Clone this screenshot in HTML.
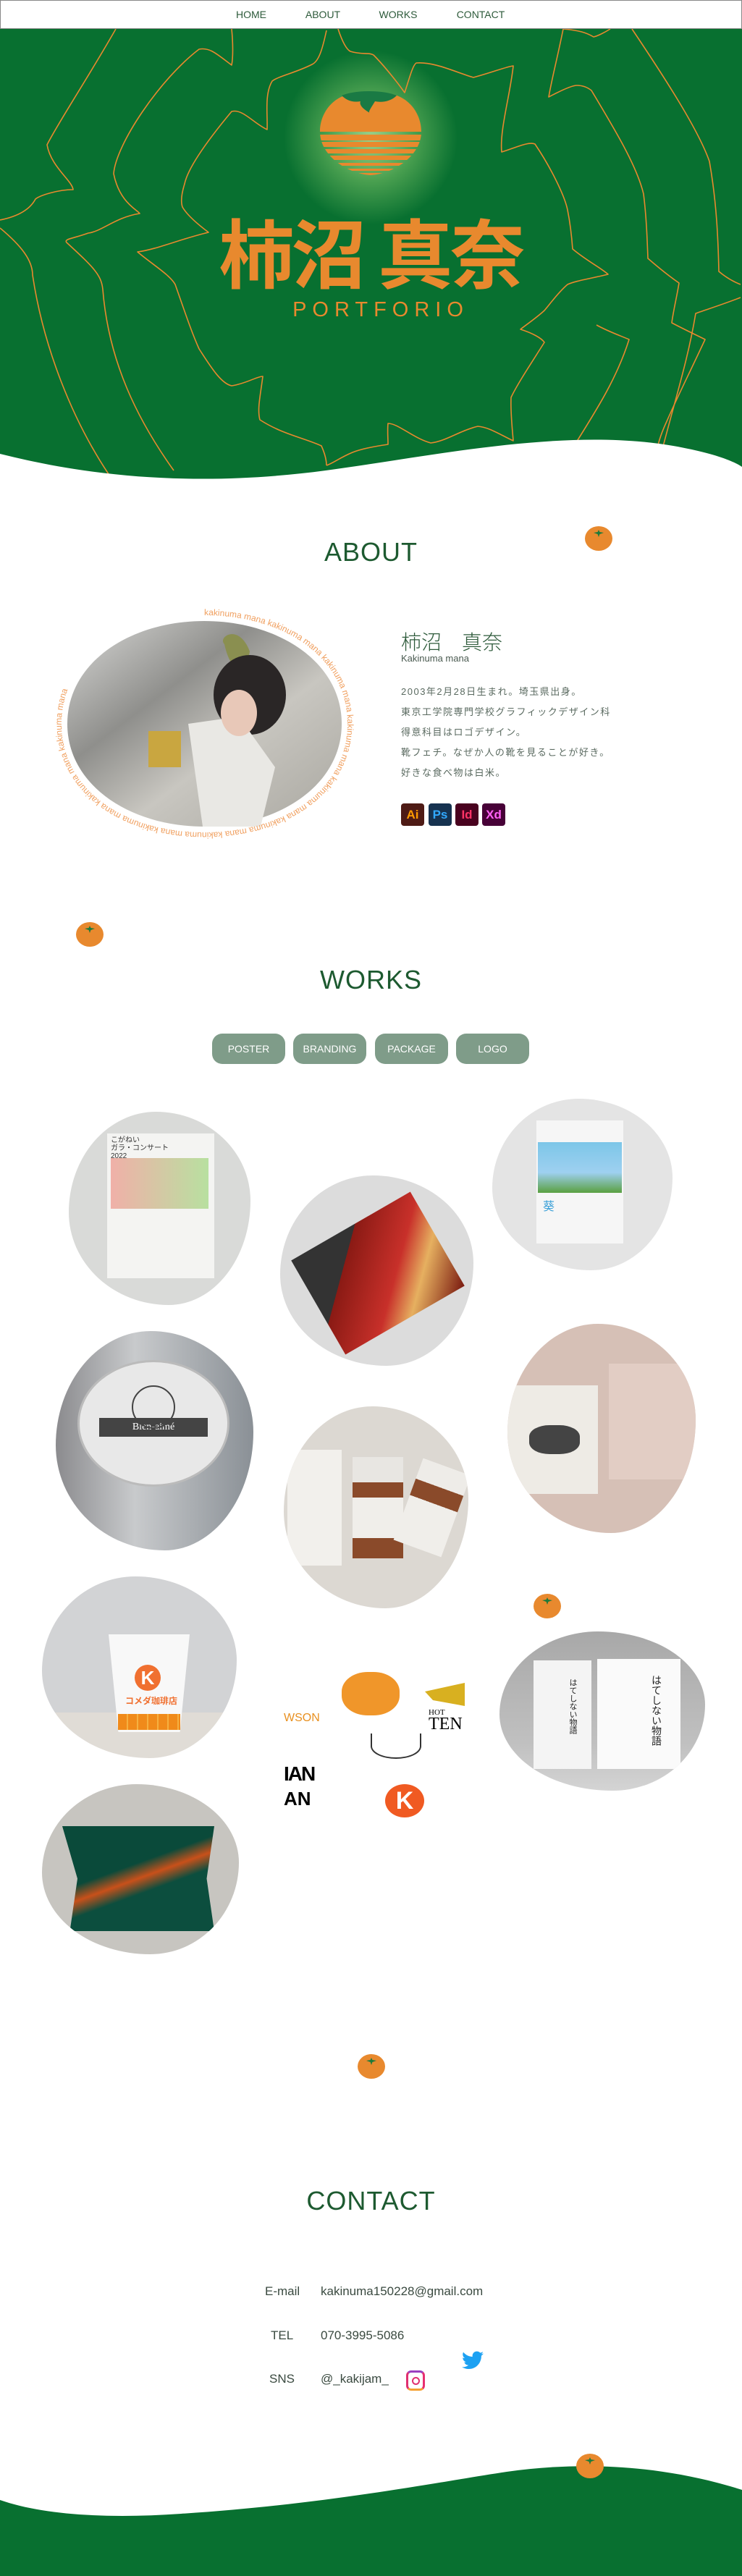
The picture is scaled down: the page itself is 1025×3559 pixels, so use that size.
<!DOCTYPE html>
<html><head><meta charset="utf-8"><style>
*{margin:0;padding:0;box-sizing:border-box}
body{width:1025px;height:3559px;position:relative;background:#fff;font-family:"Liberation Sans","Noto Sans CJK JP",sans-serif;overflow:hidden}
.a{position:absolute}
nav{position:absolute;left:0;top:0;width:1025px;height:40px;background:#fff;border:1px solid #888;z-index:5}
nav span{position:absolute;top:11px;font-size:14px;color:#2d5a3a;transform:translateX(-50%);font-weight:300}
h2{position:absolute;left:0;width:1025px;text-align:center;font-weight:300;font-size:36px;color:#1d5a30;letter-spacing:1px}
.btn{position:absolute;top:1428px;height:42px;width:101px;background:#7f9c89;border-radius:14px;color:#fff;font-size:14px;text-align:center;line-height:42px}
.blob{position:absolute;overflow:hidden;border-radius:48% 52% 45% 55% / 52% 46% 54% 48%}
.lbl{position:absolute;font-size:17px;color:#3a4a40}
.kaki{position:absolute;width:38px;height:34px;border-radius:50%;background:#e8892e}
.kaki:after{content:"";position:absolute;left:12px;top:5px;width:14px;height:10px;background:#1e7a3a;clip-path:polygon(0 40%,40% 30%,50% 0,60% 30%,100% 40%,60% 60%,50% 100%,40% 60%)}
</style></head><body>
<nav><span style="left:346px">HOME</span><span style="left:445px">ABOUT</span><span style="left:549px">WORKS</span><span style="left:663px">CONTACT</span></nav>

<svg class="a" style="left:0;top:0" width="1025" height="700" viewBox="0 0 1025 700">
<defs><radialGradient id="g" cx="512" cy="190" r="120" gradientUnits="userSpaceOnUse"><stop offset="0" stop-color="#9fd08a"/><stop offset=".5" stop-color="#4aa050"/><stop offset="1" stop-color="#087030"/></radialGradient>
<clipPath id="pc"><path d="M512,131 C470,120 442,150 442,182 C442,215 480,240 512,242 C544,240 582,215 582,182 C582,150 554,120 512,131 Z"/></clipPath></defs>
<rect x="0" y="40" width="1025" height="640" fill="#087030"/>
<circle cx="512" cy="190" r="120" fill="url(#g)"/>
<g fill="none" stroke="#e8892e" stroke-width="1.6" stroke-linejoin="round">
<path d="M160,40 C120,110 80,170 65,200 C70,230 100,250 101,262 C80,262 55,270 49,275 C40,292 20,300 0,304"/>
<path d="M0,315 C30,340 45,360 45,380 C60,480 100,580 150,655"/>
<path d="M320,40 C322,60 322,80 320,90 C300,75 290,65 275,68 C220,110 160,200 157,240 C165,280 190,290 193,295 C160,300 140,320 122,322 C100,330 88,330 92,335 C130,370 140,380 142,400 C150,500 190,580 240,650"/>
<path d="M451,42 C445,70 440,85 431,89 C410,100 385,105 376,112 C365,130 370,160 369,179 C350,170 335,150 320,154 C290,190 260,230 255,254 C250,270 250,280 252,286 C260,300 280,315 288,321 C250,330 215,345 190,348 C210,365 235,380 242,393 C255,430 265,460 275,482 C290,505 305,530 320,533 C340,530 355,520 363,520 C360,545 355,565 359,580 C390,600 420,605 444,616 C448,625 451,635 451,643"/>
<path d="M467,40 C472,55 478,68 484,71 C500,76 510,72 516,76 C530,90 550,115 559,128 C565,110 570,90 575,87 C600,85 630,100 654,107 C680,100 700,92 709,91 C705,130 690,180 693,210 C710,205 730,195 739,199 C760,230 780,270 784,290 C788,310 790,330 791,344 C810,360 830,370 840,379 C815,385 795,388 784,393 C770,405 760,420 752,429 C740,440 725,450 719,455 C735,460 748,467 752,473 C735,500 715,530 706,549 C705,570 708,595 709,609 C690,600 675,590 660,589 C635,595 615,610 595,612 C570,605 550,585 536,585 C535,595 536,605 536,614 C515,617 500,620 487,625 C470,632 460,640 451,643"/>
<path d="M843,40 C835,45 825,50 820,51 C810,45 800,42 778,40 C770,80 762,110 758,134 C775,125 790,118 797,118 C805,118 812,121 817,125 C850,180 880,230 889,268 C893,300 894,330 895,357 C910,370 925,382 938,391 C935,410 930,430 928,446 C945,455 960,462 974,469 C955,510 935,550 922,580 C915,595 910,608 908,620"/>
<path d="M873,40 C920,110 965,180 980,223 C990,280 992,330 993,375 C1005,385 1015,390 1023,393"/>
<path d="M1023,411 C1000,420 975,428 961,433 C950,500 930,560 910,640"/>
<path d="M824,449 C840,458 860,465 869,469 C850,530 815,580 778,640"/>
</g>
<g clip-path="url(#pc)" fill="#e8892e">
<rect x="440" y="120" width="145" height="62"/>
<rect x="440" y="186" width="145" height="8"/><rect x="440" y="196" width="145" height="7"/><rect x="440" y="206" width="145" height="6"/><rect x="440" y="215" width="145" height="6"/><rect x="440" y="225" width="145" height="4"/><rect x="440" y="233" width="145" height="3"/><rect x="440" y="239" width="145" height="3"/>
</g>
<path d="M472,132 C490,124 530,124 548,132 C540,140 528,142 518,140 C512,150 508,155 511,156 C500,150 496,144 498,140 C486,142 478,138 472,132 Z" fill="#1a7a44"/>
<path d="M0,627 C150,665 300,670 450,650 C600,630 780,590 930,616 C980,625 1010,635 1025,645 L1025,700 L0,700 Z" fill="#fff"/>
<text x="512" y="390" text-anchor="middle" font-family="Noto Sans CJK JP,sans-serif" font-weight="bold" font-size="104" fill="#e8892e" letter-spacing="-4">柿沼 真奈</text>
<text x="526" y="437" text-anchor="middle" font-family="Liberation Sans,sans-serif" font-size="29" fill="#e8892e" letter-spacing="8">PORTFORIO</text>
</svg>

<h2 style="top:742px">ABOUT</h2>
<div class="kaki" style="left:808px;top:727px"></div>

<svg class="a" style="left:60px;top:840px" width="440" height="320" viewBox="60 840 440 320">
<defs><linearGradient id="ph" x1="0" y1="0" x2="1" y2="1"><stop offset="0" stop-color="#d8d8d6"/><stop offset=".35" stop-color="#8f8f8c"/><stop offset=".6" stop-color="#c8c6c0"/><stop offset="1" stop-color="#a9a7a0"/></linearGradient>
<path id="ring" d="M282,850 C395,850 480,910 480,1000 C480,1090 395,1150 282,1150 C170,1150 85,1090 85,1000 C85,910 170,850 282,850 Z"/></defs>
<path d="M282,858 C385,858 472,915 472,1000 C472,1085 385,1142 282,1142 C180,1142 93,1085 93,1000 C93,915 180,858 282,858 Z" fill="url(#ph)"/>
<path d="M310,890 C300,880 330,860 345,900 C340,930 320,935 310,890 Z" fill="#8a8f50"/>
<ellipse cx="345" cy="960" rx="50" ry="55" fill="#2a2626"/>
<path d="M260,1000 L330,990 L380,1060 L360,1142 L280,1142 Z" fill="#e9e8e4"/>
<rect x="205" y="1010" width="45" height="50" fill="#c9a640"/>
<ellipse cx="330" cy="985" rx="25" ry="32" fill="#e8c8b8"/>
<text font-size="12" fill="#f0a060" font-family="Liberation Sans,sans-serif"><textPath href="#ring">kakinuma  mana   kakinuma  mana   kakinuma  mana   kakinuma  mana   kakinuma  mana   kakinuma  mana   kakinuma  mana   kakinuma  mana  kakinuma  mana  kakinuma  mana</textPath></text>
</svg>

<div class="a" style="left:554px;top:866px;font-size:28px;color:#2d5a3a;font-weight:300">柿沼　真奈</div>
<div class="a" style="left:554px;top:902px;font-size:13px;color:#4a5a50">Kakinuma mana</div>
<div class="a" style="left:554px;top:942px;font-size:13px;color:#5a6a60;line-height:28px;letter-spacing:1.5px">2003年2月28日生まれ。埼玉県出身。<br>東京工学院専門学校グラフィックデザイン科<br>得意科目はロゴデザイン。<br>靴フェチ。なぜか人の靴を見ることが好き。<br>好きな食べ物は白米。</div>
<div class="a" style="left:554px;top:1110px;width:32px;height:31px;background:#4e1b15;border-radius:4px;color:#ff9a00;font-weight:bold;font-size:17px;text-align:center;line-height:31px">Ai</div>
<div class="a" style="left:592px;top:1110px;width:32px;height:31px;background:#163250;border-radius:4px;color:#31a8ff;font-weight:bold;font-size:17px;text-align:center;line-height:31px">Ps</div>
<div class="a" style="left:629px;top:1110px;width:32px;height:31px;background:#49021f;border-radius:4px;color:#ff3366;font-weight:bold;font-size:17px;text-align:center;line-height:31px">Id</div>
<div class="a" style="left:666px;top:1110px;width:32px;height:31px;background:#470137;border-radius:4px;color:#ff61f6;font-weight:bold;font-size:17px;text-align:center;line-height:31px">Xd</div>

<div class="kaki" style="left:105px;top:1274px"></div>
<h2 style="top:1333px">WORKS</h2>
<div class="btn" style="left:293px">POSTER</div>
<div class="btn" style="left:405px">BRANDING</div>
<div class="btn" style="left:518px">PACKAGE</div>
<div class="btn" style="left:630px">LOGO</div>

<div class="blob" style="left:95px;top:1536px;width:251px;height:267px;background:#d9dad8">
 <div class="a" style="left:53px;top:30px;width:148px;height:200px;background:#f4f4f2"></div>
 <div class="a" style="left:58px;top:64px;width:135px;height:70px;background:linear-gradient(90deg,#f0b0a8,#b8e0a0)"></div>
 <div class="a" style="left:58px;top:34px;font-size:10px;color:#333;line-height:11px">こがねい<br>ガラ・コンサート<br>2022</div>
</div>
<div class="blob" style="left:387px;top:1624px;width:267px;height:263px;background:#dcdcdc">
 <div class="a" style="left:40px;top:60px;width:190px;height:150px;background:linear-gradient(135deg,#333 0 30%,#8a1a14 30%,#c8302a 60%,#e6b060 75%,#7a1a10);transform:rotate(-30deg)"></div>
</div>
<div class="blob" style="left:680px;top:1518px;width:249px;height:237px;background:#e4e4e4">
 <div class="a" style="left:61px;top:30px;width:120px;height:170px;background:#f6f6f6"></div>
 <div class="a" style="left:63px;top:60px;width:116px;height:70px;background:linear-gradient(180deg,#7cc6e8,#9ed0f0 60%,#5aa040)"></div>
 <div class="a" style="left:70px;top:135px;font-size:16px;color:#3aa0d8">葵</div>
</div>
<div class="blob" style="left:77px;top:1839px;width:273px;height:303px;background:linear-gradient(90deg,#8b8b8e,#c8cacc 40%,#8a9096)">
 <div class="a" style="left:30px;top:40px;width:210px;height:175px;border-radius:50%;background:#e8e8e8;border:3px solid #bbb"></div>
 <div class="a" style="left:60px;top:120px;width:150px;height:26px;background:#444;color:#fff;font-family:'Liberation Serif',serif;font-size:14px;text-align:center;line-height:26px">Bien-aimé</div>
 <div class="a" style="left:105px;top:75px;width:60px;height:60px;border:2px solid #444;border-radius:50%"></div>
</div>
<div class="blob" style="left:392px;top:1943px;width:255px;height:279px;background:#dcd8d2">
 <div class="a" style="left:5px;top:60px;width:75px;height:160px;background:#f2f0ec"></div>
 <div class="a" style="left:95px;top:70px;width:70px;height:140px;background:linear-gradient(180deg,#e8e6e2 0 25%,#8a4a2a 25% 40%,#f0eeea 40% 80%,#8a4a2a 80%)"></div>
 <div class="a" style="left:170px;top:80px;width:70px;height:120px;background:linear-gradient(180deg,#eeece8 0 25%,#8a4a2a 25% 45%,#f0eeea 45%);transform:rotate(20deg)"></div>
</div>
<div class="blob" style="left:701px;top:1829px;width:260px;height:289px;background:#d6c0b6">
 <div class="a" style="left:0;top:85px;width:125px;height:150px;background:#eeebe5"></div>
 <div class="a" style="left:140px;top:55px;width:120px;height:160px;background:#e2cdc4"></div>
 <div class="a" style="left:30px;top:140px;width:70px;height:40px;background:#444;border-radius:40%"></div>
</div>
<div class="kaki" style="left:737px;top:2202px"></div>
<div class="blob" style="left:58px;top:2178px;width:269px;height:251px;background:linear-gradient(180deg,#d2d3d5 0 75%,#e0dcd6 75%)">
 <div class="a" style="left:92px;top:80px;width:112px;height:135px;background:#f8f8f8;clip-path:polygon(0 0,100% 0,88% 100%,12% 100%)"></div>
 <div class="a" style="left:105px;top:190px;width:86px;height:22px;background:repeating-linear-gradient(90deg,#f08a1a 0 12px,#f5b040 12px 14px)"></div>
 <div class="a" style="left:128px;top:122px;width:36px;height:36px;border-radius:50%;background:#f07030;color:#fff;font-weight:bold;font-size:26px;text-align:center;line-height:36px">K</div>
 <div class="a" style="left:115px;top:163px;font-size:12px;color:#f07030;font-weight:bold">コメダ珈琲店</div>
</div>
<div class="a" style="left:392px;top:2305px;width:255px;height:224px">
 <div class="a" style="left:80px;top:5px;width:80px;height:60px;border-radius:45%;background:#f0962a"></div>
 <div class="a" style="left:195px;top:12px;width:55px;height:40px;background:#d8b020;clip-path:polygon(0 50%,100% 20%,100% 100%,20% 80%)"></div>
 <div class="a" style="left:200px;top:55px;font-family:'Liberation Serif',serif;font-size:11px">HOT</div>
 <div class="a" style="left:200px;top:64px;font-family:'Liberation Serif',serif;font-size:24px">TEN</div>
 <div class="a" style="left:0;top:60px;font-size:16px;color:#e89020">WSON</div>
 <div class="a" style="left:0;top:130px;font-size:28px;font-weight:900;letter-spacing:-2px">IAN</div>
 <div class="a" style="left:0;top:165px;font-size:26px;font-weight:bold">AN</div>
 <div class="a" style="left:140px;top:160px;width:54px;height:46px;border-radius:50%;background:#f05a22;color:#fff;font-size:34px;font-weight:bold;text-align:center;line-height:46px">K</div>
 <div class="a" style="left:120px;top:90px;width:70px;height:35px;border:2px solid #333;border-top:none;border-radius:0 0 50% 50%"></div>
</div>
<div class="blob" style="left:690px;top:2254px;width:284px;height:220px;background:linear-gradient(180deg,#a8a8a8,#c0c0c0 70%,#d4d4d4)">
 <div class="a" style="left:47px;top:40px;width:80px;height:150px;background:#f4f4f4"></div>
 <div class="a" style="left:135px;top:38px;width:115px;height:152px;background:#fafafa"></div>
 <div class="a" style="left:207px;top:60px;font-size:14px;writing-mode:vertical-rl;color:#222">はてしない物語</div>
 <div class="a" style="left:93px;top:65px;font-size:11px;writing-mode:vertical-rl;color:#222">はてしない物語</div>
</div>
<div class="blob" style="left:58px;top:2465px;width:272px;height:235px;background:#c7c5c0">
 <div class="a" style="left:28px;top:58px;width:210px;height:145px;background:linear-gradient(160deg,#0a4a3a 40%,#c8501a 50%,#0c4e3e 60%);clip-path:polygon(0 0,100% 0,95% 50%,100% 100%,5% 100%,10% 50%)"></div>
</div>

<div class="kaki" style="left:494px;top:2838px"></div>
<h2 style="top:3020px">CONTACT</h2>
<div class="lbl" style="left:366px;top:3156px">E-mail</div>
<div class="lbl" style="left:443px;top:3156px">kakinuma150228@gmail.com</div>
<div class="lbl" style="left:374px;top:3217px">TEL</div>
<div class="lbl" style="left:443px;top:3217px">070-3995-5086</div>
<div class="lbl" style="left:372px;top:3277px">SNS</div>
<div class="lbl" style="left:443px;top:3277px">@_kakijam_</div>
<div class="a" style="left:561px;top:3275px;width:26px;height:28px;border:3px solid #d8308a;border-radius:7px;border-color:#9a40c0 #e83070 #f5a030 #e03070"><div class="a" style="left:5px;top:6px;width:11px;height:11px;border:2px solid #e03070;border-radius:50%"></div></div>
<svg class="a" style="left:638px;top:3248px" width="30" height="26" viewBox="0 0 24 20"><path d="M24,2.4c-.9.4-1.8.6-2.8.8 1-.6 1.8-1.6 2.2-2.7-1 .6-2,1-3.1,1.2C19.3.7 18,.1 16.6.1c-2.7,0-4.9,2.2-4.9,4.9 0,.4,0 .8.1,1.1C7.7,5.9 4.1,4 1.7,1C1.2,1.8 1,2.6 1,3.5c0,1.7.9,3.2 2.2,4.1-.8,0-1.6-.2-2.2-.6v.1c0,2.4 1.7,4.4 3.9,4.8-.4.1-.8.2-1.3.2-.3,0-.6,0-.9-.1.6,2 2.4,3.4 4.6,3.4-1.700,1.3-3.8,2.1-6.1,2.1-.4,0-.8,0-1.2-.1 2.2,1.4 4.8,2.2 7.5,2.2 9.1,0 14-7.5 14-14v-.6C22.5,4.3 23.3,3.4 24,2.4z" fill="#1da1f2"/></svg>

<svg class="a" style="left:0;top:3380px" width="1025" height="179" viewBox="0 3380 1025 179">
<path d="M0,3454 C60,3475 150,3480 250,3473 C450,3460 600,3430 700,3415 C820,3398 930,3410 1025,3440 L1025,3559 L0,3559 Z" fill="#087030"/>
</svg>
<div class="kaki" style="left:796px;top:3390px"></div>
</body></html>
